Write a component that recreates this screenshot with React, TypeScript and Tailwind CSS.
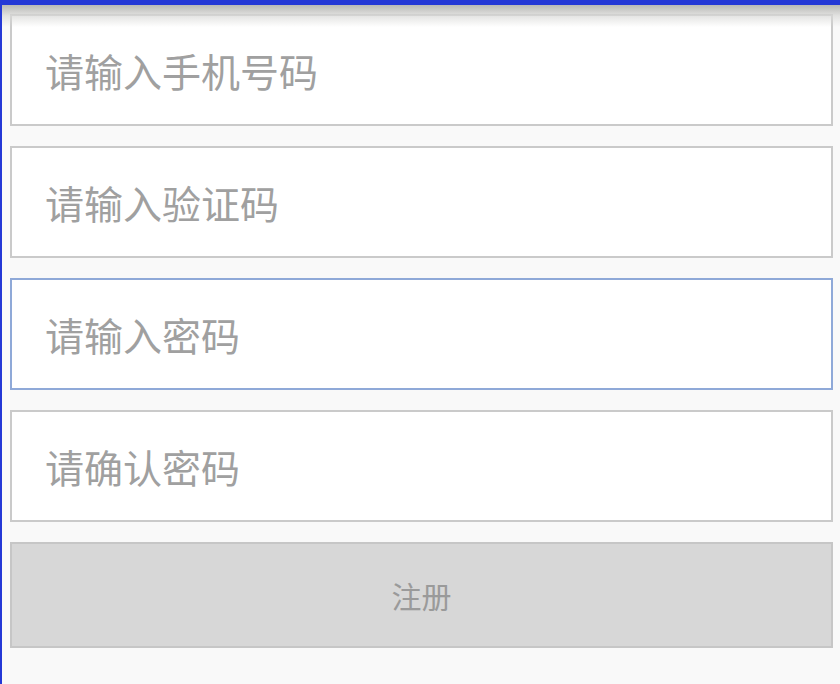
const fields = [
  { placeholder: '请输入手机号码', focused: false },
  { placeholder: '请输入验证码', focused: false },
  { placeholder: '请输入密码', focused: true },
  { placeholder: '请确认密码', focused: false },
];

const App = () => (
  <div
    className="relative h-[684px] w-[840px] overflow-hidden bg-[#f9f9f9] border-t-[5px] border-l-2 border-[#2438d6]"
    style={{ fontFamily: '"Noto Sans CJK SC", "Noto Sans", sans-serif' }}
  >
    {/* top shadow under the title bar */}
    <div className="absolute left-0 right-0 top-0 h-[22px] bg-gradient-to-b from-[#b9b9b6] via-[#d9d9d7]/70 to-transparent z-10" />

    <div className="flex flex-col gap-5 pl-2 pt-[9px] w-[831px]">
      {fields.map((f, i) => (
        <div
          key={i}
          className={`h-[112px] flex items-center bg-white pl-[33px] border-2 ${f.focused ? 'border-[#8fa9d8]' : 'border-[#cacaca]'}`}
        >
          <span className="text-[39px] text-[#a0a0a0] leading-none">{f.placeholder}</span>
        </div>
      ))}
      <button className="h-[106px] flex items-center justify-center bg-[#d7d7d7] border-2 border-[#c6c6c6] text-[30px] text-[#9a9a9a]">
        注册
      </button>
    </div>
  </div>
);

export default App;
